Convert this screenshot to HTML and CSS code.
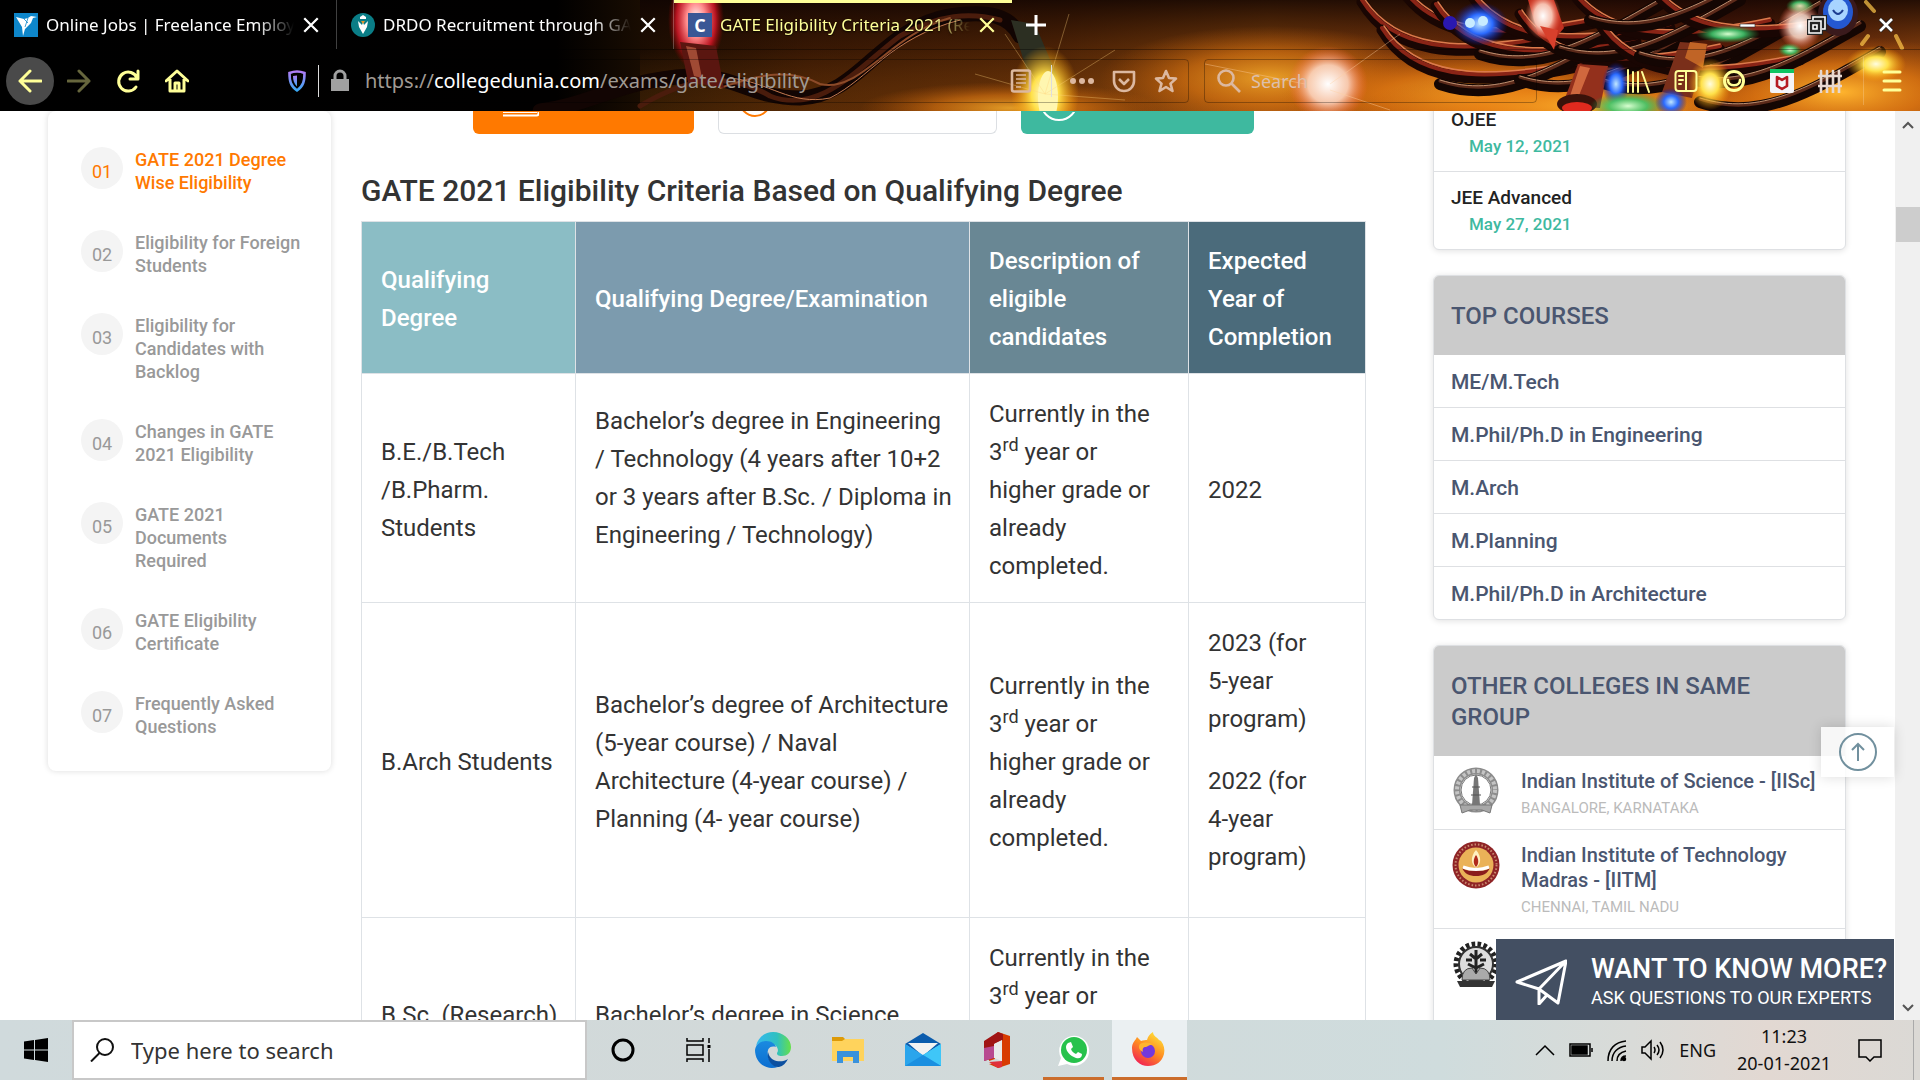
FILE: index.html
```html
<!DOCTYPE html>
<html lang="en">
<head>
<meta charset="utf-8">
<title>GATE Eligibility Criteria 2021</title>
<link rel="stylesheet" href="styles.css">
</head>
<body>
<header class="browser">
  <svg class="theme" viewBox="0 0 1920 111" preserveAspectRatio="xMaxYMid slice" aria-hidden="true">
    <defs>
      <linearGradient id="base" x1="0" x2="1" y1="0" y2="0">
        <stop offset="0" stop-color="#000"/><stop offset=".29" stop-color="#010000"/><stop offset=".34" stop-color="#1c0e02"/><stop offset=".42" stop-color="#3f1c04"/><stop offset=".55" stop-color="#5a2a07"/><stop offset=".66" stop-color="#8f4a0e"/><stop offset=".8" stop-color="#7a2f0c"/><stop offset=".9" stop-color="#6a220b"/><stop offset="1" stop-color="#9a4a10"/>
      </linearGradient>
      <linearGradient id="topdark" x1="0" x2="0" y1="0" y2="1">
        <stop offset="0" stop-color="#100402" stop-opacity=".85"/><stop offset=".45" stop-color="#200a02" stop-opacity=".25"/><stop offset="1" stop-color="#e07a10" stop-opacity=".15"/>
      </linearGradient>
      <radialGradient id="amber"><stop offset="0" stop-color="#ffb52e"/><stop offset=".5" stop-color="#e87d12" stop-opacity=".7"/><stop offset="1" stop-color="#c05a08" stop-opacity="0"/></radialGradient>
      <radialGradient id="white"><stop offset="0" stop-color="#fff"/><stop offset=".5" stop-color="#ffd9c8" stop-opacity=".85"/><stop offset="1" stop-color="#ff5a3c" stop-opacity="0"/></radialGradient>
      <radialGradient id="red"><stop offset="0" stop-color="#fff"/><stop offset=".35" stop-color="#ff8a8a"/><stop offset=".7" stop-color="#e0182a" stop-opacity=".8"/><stop offset="1" stop-color="#a00" stop-opacity="0"/></radialGradient>
      <radialGradient id="blue"><stop offset="0" stop-color="#bfe6ff"/><stop offset=".45" stop-color="#2b6bff"/><stop offset="1" stop-color="#0a12a0" stop-opacity="0"/></radialGradient>
      <radialGradient id="green"><stop offset="0" stop-color="#d8ffd0"/><stop offset=".5" stop-color="#3fc46a" stop-opacity=".9"/><stop offset="1" stop-color="#2a8a3a" stop-opacity="0"/></radialGradient>
      <radialGradient id="yellow"><stop offset="0" stop-color="#fffde0"/><stop offset=".4" stop-color="#ffe14a"/><stop offset="1" stop-color="#ff9a00" stop-opacity="0"/></radialGradient>
      <g id="cable"><path d="M0 0C30 50 90 60 200 36" stroke="#190603" stroke-width="11"/><path d="M0 -2C30 46 90 56 200 32" stroke="#8a2416" stroke-width="4"/><path d="M2 -4C32 43 92 53 200 30" stroke="#dc7a4c" stroke-width="1.500"/></g>
      <g id="dark"><path d="M0 40C60 60 110 30 180 -10" stroke="#140603" stroke-width="12"/><path d="M0 37C60 57 110 27 180 -13" stroke="#5c2a1a" stroke-width="3"/><path d="M0 36C60 55 110 25 180 -15" stroke="#c09070" stroke-width="1"/></g>
    </defs>
    <rect width="1920" height="111" fill="url(#base)"/>
    <rect x="640" width="1280" height="111" fill="url(#topdark)"/>
    <ellipse cx="1010" cy="108" rx="150" ry="26" fill="url(#amber)" opacity=".8"/>
    <ellipse cx="1270" cy="78" rx="170" ry="52" fill="url(#amber)" opacity=".8"/>
    <ellipse cx="1480" cy="96" rx="200" ry="50" fill="url(#amber)"/>
    <ellipse cx="1600" cy="106" rx="240" ry="36" fill="url(#amber)"/>
    <ellipse cx="1840" cy="92" rx="170" ry="56" fill="url(#amber)"/>
    <g fill="none" stroke-linecap="round">
      <path d="M540 111C590 105 620 80 690 76c50 0 60 22 110 22 60-2 80-70 150-82 40-6 60 0 70 20" stroke="#120503" stroke-width="15"/>
      <path d="M640 106c50-30 90-34 130-10 50 20 90-30 130-60 40-22 70-24 100-16" stroke="#4a1c0c" stroke-width="5"/>
      <path d="M720 88c40-14 70-20 100-4 40 10 70-50 130-66" stroke="#8c4a28" stroke-width="2"/>
      <path d="M730 78c40 4 60 28 100 20 40-20 60-60 130-78" stroke="#c47a50" stroke-width="1"/>
      <use href="#cable" x="1362" y="2"/><use href="#cable" x="1382" y="30"/><use href="#cable" x="1400" y="-14"/>
      <use href="#dark" x="1440" y="44"/><use href="#cable" x="1436" y="6"/><use href="#cable" x="1470" y="-8"/>
      <use href="#dark" x="1520" y="40"/><use href="#dark" x="1480" y="14"/><use href="#cable" x="1520" y="14"/>
      <use href="#cable" x="1570" y="-12"/><use href="#dark" x="1560" y="10"/><use href="#dark" x="1600" y="42"/>
      <use href="#cable" x="1600" y="24"/><use href="#dark" x="1640" y="16"/><use href="#dark" x="1680" y="36"/>
      <use href="#cable" x="1650" y="-16"/><use href="#dark" x="1590" y="-20"/><use href="#dark" x="1700" y="62"/>
    </g>
    <ellipse cx="696" cy="20" rx="28" ry="50" fill="url(#red)"/>
    <path d="M680 42l36 4 8 42-36-6z" fill="#5a1610"/><path d="M686 46l10 2 6 30-8-2z" fill="#a04a34"/>
    <path d="M1011 20l24 4 22 52-26 8z" fill="#2c2f22"/>
    <ellipse cx="1045" cy="94" rx="34" ry="48" fill="url(#yellow)"/><ellipse cx="1048" cy="97" rx="10" ry="26" fill="#fff6b0"/>
    <path d="M1045 94l70-44M1045 94l80 6M1045 94l-70-20M1045 94l24-80M1045 94l-40-60" stroke="#ffd27a" stroke-opacity=".35"/>
    <ellipse cx="1328" cy="84" rx="40" ry="38" fill="url(#white)"/>
    <path d="M1305 84l-100-20M1330 84l70-50M1330 90l60 20" stroke="#ffd0a0" stroke-opacity=".4"/>
    <ellipse cx="1480" cy="24" rx="28" ry="22" fill="url(#blue)"/><circle cx="1470" cy="23" r="5" fill="#c8ecff"/><circle cx="1483" cy="21" r="5" fill="#c8ecff"/><circle cx="1450" cy="23" r="7" fill="#2a18b0"/>
    <path d="M1528 0h26l10 28-12 14-14-8z" fill="#c03020"/><ellipse cx="1543" cy="16" rx="18" ry="24" fill="url(#white)"/><path d="M1540 26l18 4-4 20z" fill="#d8402c"/>
    <path d="M1578 64l30 2-8 42-38-2z" fill="#93301c"/><path d="M1580 66l10 2-12 30-8-2z" fill="#d0683e"/><ellipse cx="1577" cy="104" rx="20" ry="10" fill="#3a120a"/><ellipse cx="1577" cy="108" rx="15" ry="6" fill="#e02a1e"/>
    <ellipse cx="1616" cy="84" rx="14" ry="22" fill="url(#blue)"/><ellipse cx="1628" cy="106" rx="38" ry="14" fill="url(#green)"/>
    <path d="M1680 42l28 2-16 54-30-6z" fill="#7a2f1a"/><path d="M1690 42l17 2-4 24-18-10z" fill="#c06426"/><ellipse cx="1671" cy="102" rx="16" ry="14" fill="url(#blue)"/>
    <ellipse cx="1710" cy="84" rx="22" ry="26" fill="url(#yellow)"/><ellipse cx="1728" cy="34" rx="32" ry="9" fill="url(#green)"/><ellipse cx="1790" cy="50" rx="12" ry="7" fill="url(#green)"/><ellipse cx="1800" cy="6" rx="14" ry="8" fill="url(#green)"/>
    <ellipse cx="1800" cy="26" rx="22" ry="24" fill="url(#white)"/><ellipse cx="1838" cy="14" rx="20" ry="22" fill="#3a1a1c"/><ellipse cx="1838" cy="12" rx="15" ry="17" fill="#2458d0"/><ellipse cx="1838" cy="10" rx="10" ry="11" fill="#a8d4ff"/><path d="M1833 10q5 8 10 0" fill="none" stroke="#1c3c90" stroke-width="2"/>
    <ellipse cx="1876" cy="64" rx="30" ry="18" fill="url(#yellow)"/><path d="M1862 44l6-8M1896 36l6 12M1866 2l8 9" stroke="#ffc84a" stroke-width="4" stroke-linecap="round" opacity=".7"/>
  </svg>
  <div class="tabs">
    <div class="tab">
      <svg class="fav" viewBox="0 0 24 24"><path fill="#0e86ca" d="M0 0h24v24H0z"/><path fill="#fff" d="M2 4l8 2 4-1 3-2 6 1-4 1-2 5-6 6-2 7-1-9z"/><path d="M10 6l4 4M14 5l-3 9" stroke="#0e86ca" stroke-width=".8"/></svg>
      <span class="title">Online Jobs | Freelance Employment</span>
      <button class="x" aria-label="Close tab"><svg viewBox="0 0 16 16"><path d="M2 2l12 12M14 2L2 14"/></svg></button>
    </div>
    <div class="tab">
      <svg class="fav" viewBox="0 0 24 24"><circle cx="12" cy="12" r="12" fill="#0a7d86"/><path fill="#fff" d="M9 4l3-2 3 2v2H9zM7 8l4 4 1-3 1 3 4-4-1 6-4 7-4-7z"/><path d="M10 8l2 3 2-3z" fill="#e8952a"/></svg>
      <span class="title">DRDO Recruitment through GATE</span>
      <button class="x" aria-label="Close tab"><svg viewBox="0 0 16 16"><path d="M2 2l12 12M14 2L2 14"/></svg></button>
    </div>
    <div class="tab active">
      <span class="fav cfav">C</span>
      <span class="title">GATE Eligibility Criteria 2021 (Released)</span>
      <button class="x" aria-label="Close tab"><svg viewBox="0 0 16 16"><path d="M2 2l12 12M14 2L2 14"/></svg></button>
    </div>
    <button class="plus" aria-label="New tab"><svg viewBox="0 0 20 20"><path d="M10 0v20M0 10h20"/></svg></button>
    <div class="win">
      <button aria-label="Minimise"><svg viewBox="0 0 20 20"><path d="M2 9h15v3H2z" fill="#fff" stroke="#222" stroke-width=".6"/></svg></button>
      <button aria-label="Restore"><svg viewBox="0 0 20 20"><path d="M6 5V2h12v12h-3M2 6h12v12H2zM6 10h4v4H6z" fill="none" stroke="#222" stroke-width="4"/><path d="M6 5V2h12v12h-3M2 6h12v12H2zM6 10h4v4H6z" fill="none" stroke="#fff" stroke-width="1.6"/></svg></button>
      <button aria-label="Close"><svg viewBox="0 0 20 20"><path d="M4 4l12 12M16 4L4 16" stroke="#222" stroke-width="4"/><path d="M4 4l12 12M16 4L4 16" stroke="#fff" stroke-width="2.6"/></svg></button>
    </div>
  </div>
  <div class="toolbar">
    <button class="nav back" aria-label="Back"><svg viewBox="0 0 24 24"><path d="M23 12H2M12 2L2 12l10 10"/></svg></button>
    <button class="nav fwd" aria-label="Forward"><svg viewBox="0 0 24 24"><path d="M1 12h21M12 2l10 10-10 10"/></svg></button>
    <button class="nav" aria-label="Reload"><svg viewBox="0 0 24 24"><path d="M20 18a9.500 9.500 0 1 1 1-9M22 2v8h-8"/></svg></button>
    <button class="nav" aria-label="Home"><svg viewBox="0 0 24 24"><path d="M1 12L12 2l11 10M5 10v12h14V10M10 22v-8h4v8"/></svg></button>
    <div class="url">
      <svg class="i20" viewBox="0 0 20 22"><defs><linearGradient id="sh" x2="0" y2="1"><stop stop-color="#b07cf5"/><stop offset="1" stop-color="#3aa8f5"/></linearGradient></defs><path d="M10 1.500c3 0 5 .5 7.500 1.500 0 8-1 13-7.500 17.500C3.500 16 2.500 11 2.500 3 5 2 7 1.500 10 1.500z" fill="none" stroke="url(#sh)" stroke-width="2.600"/><path d="M10 5.500v11C7 13.500 6 10 6 6z" fill="url(#sh)"/></svg>
      <span class="vline"></span>
      <svg class="i20" viewBox="0 0 20 22"><path d="M1 9h18v12H1z" fill="#a0a0a0"/><path d="M5 10V6a5 5 0 0 1 10 0v4" fill="none" stroke="#a0a0a0" stroke-width="3"/></svg>
      <span class="addr">https://<b>collegedunia.com</b>/exams/gate/eligibility</span>
      <span class="urlicons">
        <svg viewBox="0 0 24 24"><rect x="3" y="1.500" width="18" height="21" rx="2"/><path d="M7 6h10M7 10h10M7 14h10M7 18h5" stroke-width="1.500"/></svg>
        <span class="vline"></span>
        <svg viewBox="0 0 24 24"><circle class="f" cx="3" cy="12" r="3"/><circle class="f" cx="12" cy="12" r="3"/><circle class="f" cx="21" cy="12" r="3"/></svg>
        <svg viewBox="0 0 24 24"><path d="M2 3h20v9a10 10 0 0 1-20 0zM7 10l5 5 5-5"/></svg>
        <svg viewBox="0 0 24 24"><path d="M12 2l3 7 7 .6-5.500 5L18.500 22 12 18l-6.500 4 2-7.400L2 9.600 9 9z"/></svg>
      </span>
    </div>
    <label class="find"><svg viewBox="0 0 24 24"><circle cx="9" cy="9" r="7.500"/><path d="M14.500 14.500L23 23"/></svg><input type="text" placeholder="Search" aria-label="Search"></label>
    <div class="tools">
      <button aria-label="Library"><svg viewBox="0 0 24 24"><path d="M2 1v22M7 3v20M12 3v20M16 3l7 20"/></svg></button>
      <button aria-label="Sidebars"><svg viewBox="0 0 24 24"><rect x="1.500" y="2" width="21" height="20" rx="3"/><path d="M12 2v20M5 7h4M5 11h4M5 15h2" /></svg></button>
      <button aria-label="Account"><svg viewBox="0 0 24 24"><circle cx="12" cy="12" r="9.500" stroke-width="3"/><path d="M6 11c0 7 12 7 12 0" stroke-width="2.600"/></svg></button>
      <button aria-label="WebAdvisor"><svg viewBox="0 0 24 24"><rect width="24" height="24" rx="2" fill="#f4f4f8" stroke="none"/><path d="M0 0h24v4H0z" fill="#0fc463" stroke="none"/><path d="M7 8l5 3 5-3v9l-5 3-5-3z" stroke="#b51a22" stroke-width="2.600"/></svg></button>
      <button aria-label="Containers"><svg viewBox="0 0 24 24"><path d="M3 24V2M9 24V2M15 24V2M21 24V2M0 7h24M0 17h24" stroke="#e8d8d0" stroke-width="2.600"/></svg></button>
      <button class="menu" aria-label="Menu"><svg viewBox="0 0 24 24"><path d="M4 3h16M4 12h16M4 21h16" stroke-width="3"/></svg></button>
    </div>
  </div>
</header>

<div class="view">
  <div class="page">
    <nav class="toc">
      <ol>
        <li class="on"><span class="num">01</span><a href="#table">GATE 2021 Degree Wise Eligibility</a></li>
        <li><span class="num">02</span><a href="#">Eligibility for Foreign Students</a></li>
        <li><span class="num">03</span><a href="#">Eligibility for Candidates with Backlog</a></li>
        <li><span class="num">04</span><a href="#">Changes in GATE 2021 Eligibility</a></li>
        <li><span class="num">05</span><a href="#">GATE 2021<br>Documents<br>Required</a></li>
        <li><span class="num">06</span><a href="#">GATE Eligibility Certificate</a></li>
        <li><span class="num">07</span><a href="#">Frequently Asked Questions</a></li>
      </ol>
    </nav>
    <main>
      <div class="ctas">
        <button class="cta orange" aria-label="Download"><svg viewBox="0 0 36 22"><path d="M0 3.500h33.500a2 2 0 0 0 2-2V-10H0M0 0h34"/></svg></button>
        <button class="cta plain" aria-label="Updates"><svg viewBox="0 0 36 22"><circle cx="18" cy="-10" r="15"/></svg></button>
        <button class="cta green" aria-label="Ask"><svg viewBox="0 0 36 22"><circle cx="18" cy="-10" r="18"/></svg></button>
      </div>
      <h2>GATE 2021 Eligibility Criteria Based on Qualifying Degree</h2>
      <table id="table">
        <colgroup><col class="c1"><col class="c2"><col class="c3"><col class="c4"></colgroup>
        <thead><tr><th>Qualifying<br>Degree</th><th>Qualifying Degree/Examination</th><th>Description of eligible candidates</th><th>Expected Year of Completion</th></tr></thead>
        <tbody>
          <tr><td>B.E./B.Tech<br>/B.Pharm.<br>Students</td><td><p>Bachelor’s degree in Engineering<br>/ Technology (4 years after 10+2<br>or 3 years after B.Sc. / Diploma in<br>Engineering / Technology)</p></td><td>Currently in the<br>3<sup>rd</sup> year or<br>higher grade or<br>already<br>completed.</td><td>2022</td></tr>
          <tr><td>B.Arch Students</td><td>Bachelor’s degree of Architecture<br>(5-year course) / Naval<br>Architecture (4-year course) /<br>Planning (4- year course)</td><td>Currently in the<br>3<sup>rd</sup> year or<br>higher grade or<br>already<br>completed.</td><td><p>2023 (for<br>5-year<br>program)</p><p>2022 (for<br>4-year<br>program)</p></td></tr>
          <tr><td>B.Sc. (Research)<br>/ B.S.</td><td>Bachelor’s degree in Science<br>(Post-Diploma/4 years after 10+2)</td><td>Currently in the<br>3<sup>rd</sup> year or<br>higher grade or<br>already<br>completed.</td><td>2022</td></tr>
        </tbody>
      </table>
    </main>
    <aside>
      <section class="card exams">
        <div><a href="#">OJEE</a><time>May 12, 2021</time></div>
        <div><a href="#">JEE Advanced</a><time>May 27, 2021</time></div>
      </section>
      <section class="card">
        <h3>TOP COURSES</h3>
        <ul class="courses">
          <li><a href="#">ME/M.Tech</a></li>
          <li><a href="#">M.Phil/Ph.D in Engineering</a></li>
          <li><a href="#">M.Arch</a></li>
          <li><a href="#">M.Planning</a></li>
          <li><a href="#">M.Phil/Ph.D in Architecture</a></li>
        </ul>
      </section>
      <section class="card">
        <h3>OTHER COLLEGES IN SAME<br>GROUP</h3>
        <ul class="colleges">
          <li>
            <svg viewBox="0 0 48 48"><circle cx="24" cy="23" r="19" fill="none" stroke="#8c8c8c" stroke-width="7"/><circle cx="24" cy="23" r="19" fill="none" stroke="#c4c4c4" stroke-width="4" stroke-dasharray="3 2"/><circle cx="24" cy="23" r="15" fill="#fff" stroke="#777"/><path d="M22 11l2-4 2 4 2 27h-8z" fill="#777"/><path d="M20 20h8M19 28h10" stroke="#555"/><path d="M8 38h32l-2 8-8-3H18l-8 3z" fill="#a8a8a8" stroke="#777"/></svg>
            <div><a href="#">Indian Institute of Science - [IISc]</a><small>BANGALORE, KARNATAKA</small></div>
          </li>
          <li>
            <svg viewBox="0 0 48 48"><circle cx="24" cy="24" r="23.500" fill="#8f2426"/><circle cx="24" cy="24" r="20.500" fill="none" stroke="#c98a70" stroke-width="2" stroke-dasharray="1.500 2"/><circle cx="24" cy="24" r="17.500" fill="#eab258"/><path d="M24 9c6 7 5 14 0 18-5-4-6-11 0-18z" fill="#fff0c0"/><path d="M24 14c3 4 3 9 0 12-3-3-3-8 0-12z" fill="#b02a1c"/><path d="M10 27c4 3 9 3 14 2 5 1 10 1 14-2-3 6-7 8-14 8s-11-2-14-8z" fill="#8a1c1c"/><path d="M11 26q13 5 26 0" stroke="#fff" stroke-width="3" fill="none"/></svg>
            <div><a href="#">Indian Institute of Technology Madras - [IITM]</a><small>CHENNAI, TAMIL NADU</small></div>
          </li>
          <li>
            <svg viewBox="0 0 48 48"><circle cx="24" cy="24" r="19.500" fill="none" stroke="#222" stroke-width="6" stroke-dasharray="3.500 2.300"/><circle cx="24" cy="24" r="17" fill="#ddd" stroke="#333" stroke-width="2"/><path d="M24 10v26M18 14l6 5 6-5M14 20h6M28 20h6M16 24l8 4 8-4" stroke="#222" stroke-width="3" fill="none"/><path d="M10 40q0-12 10-12l4 6 4-6q10 0 10 12z" fill="#aaa" stroke="#444"/><path d="M5 41h38l-3 6H8z" fill="#333"/></svg>
          </li>
        </ul>
      </section>
    </aside>
  </div>
  <div class="scroll"><svg viewBox="0 0 12 8"><path d="M1 7l5-5 5 5"/></svg><span class="thumb"></span><svg viewBox="0 0 12 8"><path d="M1 1l5 5 5-5"/></svg></div>
  <button class="totop" aria-label="Back to top"><svg viewBox="0 0 40 40"><circle cx="20" cy="20" r="18"/><path d="M20 29V12M14 18l6-6 6 6"/></svg></button>
  <button class="ask"><svg viewBox="0 0 52 46"><path d="M2 23L51 2 43 44 24 30zM51 2L24 30v15l8-9"/></svg><span><strong>WANT TO KNOW MORE?</strong><em>ASK QUESTIONS TO OUR EXPERTS</em></span></button>
</div>

<footer class="taskbar">
  <button class="start" aria-label="Start"><svg viewBox="0 0 24 24"><path d="M0 3.500L10 2v9.500H0zM11 2l13-2v11.500H11zM0 12.500h10V22L0 20.500zM11 12.500h13V24l-13-2z"/></svg></button>
  <label class="tsearch"><svg viewBox="0 0 24 24"><circle cx="15" cy="9" r="8"/><path d="M9.500 15L1 23.500"/></svg><input type="text" placeholder="Type here to search" aria-label="Type here to search"></label>
  <div class="apps">
    <button aria-label="Cortana"><svg viewBox="0 0 24 24"><circle cx="12" cy="12" r="10" fill="none" stroke="#000" stroke-width="3"/></svg></button>
    <button aria-label="Task View"><svg viewBox="0 0 24 24"><path d="M1 0v3h16V0M1 24v-3h16v3M1 7h16v10H1zM23 0v5M23 11v13" fill="none" stroke="#000" stroke-width="1.500"/><path d="M21.500 7h3v3h-3z"/></svg></button>
    <button aria-label="Edge"><svg class="big" viewBox="0 0 36 36"><defs><linearGradient id="e1"><stop stop-color="#35b8f0"/><stop offset=".6" stop-color="#2fc0c0"/><stop offset="1" stop-color="#66e04a"/></linearGradient><linearGradient id="e2" x2="0" y2="1"><stop stop-color="#1a8ae0"/><stop offset="1" stop-color="#0c6ed0"/></linearGradient></defs><path d="M1 14C3 5 10 0 18 0c10 0 18 7 18 15 0 6-4 9-9 9-4 0-5-1-5-3 2-2 1-8-5-9C10 9 3 11 1 14z" fill="url(#e1)"/><path d="M0 18c1-7 7-9 11-9 6 0 9 3 10 6-8-2-9 4-8 9 1 5 5 10 10 11C10 39 0 30 0 18z" fill="url(#e2)"/><path d="M13 20c-2 8 5 16 11 15 4-1 7-4 9-8-6 4-16 3-19-4z" fill="#0c50a0"/></svg></button>
    <button aria-label="File Explorer"><svg class="big" viewBox="0 0 36 36"><path d="M2 5h11l3 3v6H2z" fill="#dd9a08"/><path d="M2 9h10l3-2h19v22H2z" fill="#ffd35c"/><path d="M7 31V19h22v12h-6v-6H13v6z" fill="#3a92dc"/></svg></button>
    <button aria-label="Mail"><svg class="big" viewBox="0 0 36 36"><path d="M0 12L18 1l18 11-18 12z" fill="#0b5cad"/><path d="M3 11h30L18 24z" fill="#f2f2f2"/><path d="M0 12l18 11 18-11v22H0z" fill="#2aa5ec"/><path d="M36 12v22L18 23z" fill="#3fc6f8"/><path d="M0 34h36L18 23z" fill="#1a8fe0"/></svg></button>
    <button aria-label="Office"><svg class="big" viewBox="0 0 36 36"><path d="M18 0l12 4v28l-12 4-9-4 13-2V8l-7 3v16l-6 2V8z" fill="#d83b01"/><path d="M4 9L18 0l5 2v6l-9 4v14l-10 3z" fill="#a01414"/><path d="M4 16l10-2v12L4 29z" fill="#b84a90"/><path d="M14 12l8-4v21l-8-3z" fill="#e8eaea"/><path d="M9 30l13-1v6l-4 1z" fill="#e0303a"/></svg></button>
    <button class="run" aria-label="WhatsApp"><svg class="big" viewBox="0 0 36 36"><path d="M3 34l3-8a15 15 0 1 1 6 6z" fill="#fff"/><circle cx="19" cy="18" r="13" fill="#27c24c"/><path d="M13 11l3-1 2 5-2 2c1 3 3 4 5 5l2-2 4 2c0 4-3 5-6 4-6-2-10-7-10-11 0-2 1-3 2-4z" fill="#fff"/></svg></button>
    <button class="run cur" aria-label="Firefox"><svg class="big" viewBox="0 0 36 36"><defs><linearGradient id="fx" x1=".8" x2=".2" y2="1"><stop stop-color="#ffe63a"/><stop offset=".5" stop-color="#ff8a20"/><stop offset="1" stop-color="#f01858"/></linearGradient></defs><path d="M2 16C2 10 6 8 7 5l4 4c2-1 5-1 6-1 1-4 3-6 6-8 0 4 4 5 6 8l2 1c3 4 4 8 3 13-2 8-8 12-16 12S2 28 2 16z" fill="url(#fx)"/><circle cx="18" cy="19" r="7" fill="#7438dd"/><path d="M10 12c4-2 10-2 13 1-3-1-4 1-7 2-3 0-4 2-3 5-4-2-5-5-3-8z" fill="#ffb52e"/></svg></button>
  </div>
  <div class="tray">
    <svg viewBox="0 0 24 24"><path d="M3 17l9-9 9 9"/></svg>
    <svg viewBox="0 0 24 24"><path d="M1 6h20v12H1zM23 10v4"/><path d="M3 8h15v8H3z" fill="#000"/></svg>
    <svg viewBox="0 0 24 24"><path d="M3 23C3 11 10 4 21 3M7 23C7 14 13 9 21 8M12 23c0-6 4-9 9-10M16 23c0-3 2-5 5-5"/><circle cx="19" cy="21" r="1.500" fill="#000"/></svg>
    <svg viewBox="0 0 24 24"><path d="M1 9h3l6-6v18l-6-6H1zM13 9q2 3 0 6M16 7q4 5 0 10M19 4q6 8 0 16"/></svg>
    <span class="lang">ENG</span>
    <span class="clock">11:23<br>20-01-2021</span>
    <svg class="note" viewBox="0 0 24 24"><path d="M1 2h22v17h-7l-4 4-4-4H1z"/></svg>
    <span class="desk"></span>
  </div>
</footer>
</body>
</html>
```
FILE: styles.css
```css
* { box-sizing: border-box; }
body { margin: 0; height: 100vh; display: flex; flex-direction: column; overflow: hidden; background: #fff; color: #333; font-family: Roboto, sans-serif; }
button { border: 0; padding: 0; background: none; color: inherit; font: inherit; }
input { border: 0; padding: 0; background: none; font: inherit; min-width: 0; flex: 1; outline: 0; }
a { color: inherit; text-decoration: none; }
ul, ol { list-style: none; margin: 0; padding: 0; }
svg { display: block; flex: none; }

/* browser chrome */
.browser { position: relative; flex: none; height: 111px; background: #000; color: #fff; font-family: "Noto Sans", "Open Sans", sans-serif; overflow: hidden; }
.theme { position: absolute; inset: 0; width: 100%; height: 100%; }
.tabs, .toolbar { position: relative; display: flex; align-items: center; }
.tabs { height: 50px; border-bottom: 1px solid rgba(0, 0, 0, .35); }
.tab { width: 337px; height: 49px; padding: 0 16px 0 14px; display: flex; align-items: center; gap: 8px; border-right: 1px solid rgba(255, 255, 255, .25); font-size: 17px; }
.tab.active { border-top: 3px solid #ffff98; border-right: 0; color: #ffff98; text-shadow: 0 1px 2px #000; height: 50px; width: 338px; padding-bottom: 3px; }
.fav { width: 24px; height: 24px; flex: none; }
.cfav { background: #3a5795; color: #fff; font: bold 18px/24px "Open Sans", sans-serif; text-align: center; text-shadow: none; }
.title { flex: 1; overflow: hidden; white-space: nowrap; -webkit-mask-image: linear-gradient(90deg, #000 85%, transparent); mask-image: linear-gradient(90deg, #000 85%, transparent); }
.x svg { width: 18px; height: 18px; stroke: currentColor; stroke-width: 2; fill: none; }
.plus { margin-left: 14px; }
.plus svg { width: 20px; height: 20px; stroke: #fff; stroke-width: 3; }
.win { margin-left: auto; display: flex; }
.win button { width: 69px; display: grid; place-items: center; }
.win svg { width: 20px; height: 20px; }
.toolbar { height: 61px; padding-left: 6px; gap: 1px; }
.nav { width: 48px; height: 48px; display: grid; place-items: center; }
.nav svg, .tools svg { width: 24px; height: 24px; fill: none; stroke: #ffff98; stroke-width: 3; stroke-linecap: round; stroke-linejoin: round; }
.back { background: #4a4a4a; border-radius: 50%; }
.fwd { opacity: .4; }
.url, .find { height: 44px; border: 1px solid rgba(0, 0, 0, .3); border-radius: 4px; display: flex; align-items: center; }
.url { flex: 1; margin-left: 74px; padding: 0 10px; gap: 11px; font-size: 20px; color: #a09a94; min-width: 0; }
.i20 { width: 20px; height: 24px; }
.vline { width: 1px; height: 32px; background: #ddd; }
.addr { flex: 1; overflow: hidden; white-space: nowrap; margin-left: 4px; }
.addr b { color: #fff; font-weight: 400; }
.urlicons { display: flex; align-items: center; gap: 18px; }
.urlicons svg, .find svg { width: 24px; height: 24px; fill: none; stroke: #dcb8a0; stroke-width: 2.6; stroke-linejoin: round; }
.urlicons .f { fill: #dcb8a0; stroke: none; }
.find { width: 333px; margin-left: 14px; padding-left: 12px; gap: 10px; font-size: 18px; }
.find input::placeholder { color: #dcbfae; }
.tools { display: flex; margin-left: 76px; }
.tools button { width: 48px; height: 48px; display: grid; place-items: center; }
.tools svg { stroke-width: 2; }
.tools .menu { width: 57px; margin-left: 9px; border-left: 1px solid rgba(255, 255, 255, .2); }

/* page viewport */
.view { position: relative; flex: 1; min-height: 0; display: flex; overflow: hidden; }
.page { flex: 1; display: flex; align-items: flex-start; padding: 0 49px 0 48px; min-width: 0; }
.scroll { width: 25px; background: #f0f0f0; display: flex; flex-direction: column; align-items: center; padding: 10px 0 8px; }
.scroll svg { width: 12px; height: 8px; stroke: #555; stroke-width: 2; fill: none; }
.thumb { width: 24px; height: 35px; background: #cdcdcd; margin: 78px 0 auto; }

.toc { width: 283px; margin-right: 30px; padding: 36px 24px 34px 33px; border-radius: 8px; box-shadow: 0 0 6px rgba(0, 0, 0, .14); font-size: 18px; line-height: 23px; font-weight: 500; color: #999; }
.toc li { display: flex; gap: 12px; margin-bottom: 37px; }
.toc li:last-child { margin-bottom: 0; }
.toc a { padding-top: 1px; margin-bottom: -1px; }
.num { width: 42px; height: 42px; flex: none; margin-bottom: -6px; padding-top: 4px; border-radius: 50%; background: #f4f4f4; text-align: center; line-height: 42px; font-weight: 400; }
.toc .on { color: #ff7900; }

main { flex: 1; min-width: 0; }
.ctas { display: flex; gap: 24px; padding-left: 112px; }
.cta { height: 23px; border-radius: 0 0 6px 6px; padding-left: 30px; overflow: hidden; }
.cta svg { width: 36px; height: 22px; fill: none; stroke: #fff; stroke-width: 2; }
.orange { width: 221px; background: #ff7900; }
.plain { width: 279px; border: 1px solid #dcdfe3; border-top: 0; padding-left: 18px; }
.plain svg { stroke: #ff7900; }
.green { width: 233px; background: #3eb99f; padding-left: 20px; }
h2 { margin: 38px 0 11px; font-size: 30px; line-height: 38px; font-weight: 500; color: #333; white-space: nowrap; }
table { width: 100%; border-collapse: collapse; table-layout: fixed; font-size: 24px; line-height: 38px; }
.c1 { width: 214px; }
.c2 { width: 394px; }
.c3 { width: 219px; }
.c4 { width: 177px; }
th, td { border: 1px solid #dee2e6; padding: 21px 0 17px 19px; text-align: left; vertical-align: middle; }
th { color: #fff; font-weight: 500; padding: 20px 12px 17px 19px; background: #8bbdc5; }
th:nth-child(2) { background: #7c9bae; }
th:nth-child(3) { background: #698794; }
th:nth-child(4) { background: #4b6b7b; }
td { white-space: nowrap; }
td p { margin: 0 0 24px; }
sup { font-size: 18px; line-height: 0; }

aside { width: 413px; margin-left: 68px; }
.card { margin-bottom: 25px; border: 1px solid #dee0e3; border-radius: 6px; overflow: hidden; box-shadow: 0 1px 6px rgba(0, 0, 0, .12); background: #fff; }
.exams { margin-top: -18px; font-size: 19px; line-height: 27px; font-weight: 500; }
.exams div { padding: 12px 17px 11px; }
.exams div + div { border-top: 1px solid #dee0e3; }
.exams a { display: block; color: #222; }
.exams time { display: block; padding-left: 18px; font-size: 17px; color: #3eb99f; }
h3 { margin: 0; padding: 25px 17px 23px; background: #cbcbcb; color: #4a5670; font-size: 24px; line-height: 31px; font-weight: 500; white-space: nowrap; }
.courses li { padding: 14px 17px 12px; font-size: 21px; line-height: 26px; font-weight: 500; color: #4a5670; }
.courses li + li, .colleges li + li { border-top: 1px solid #dee0e3; }
.colleges li { display: flex; gap: 20px; padding: 11px 0 9px 17px; }
.colleges svg { width: 50px; height: 48px; }
.colleges a { display: block; padding-top: 2px; font-size: 20px; line-height: 25px; font-weight: 500; color: #4a5670; }
.colleges small { display: block; margin-top: 2px; font-size: 15px; line-height: 24px; color: #bbb; }
.colleges li:last-child { padding-bottom: 60px; }

.totop { position: absolute; right: 26px; bottom: 243px; width: 73px; height: 50px; display: grid; place-items: center; background: rgba(255, 255, 255, .85); box-shadow: 0 0 12px rgba(0, 0, 0, .14); }
.totop svg { width: 40px; height: 40px; fill: none; stroke: #71909e; stroke-width: 2; }
.ask { position: absolute; right: 26px; bottom: 0; width: 398px; height: 81px; padding: 4px 0 0 19px; display: flex; align-items: center; gap: 24px; background: #434f62; color: #fff; text-align: left; white-space: nowrap; }
.ask svg { width: 52px; height: 46px; fill: none; stroke: #fff; stroke-width: 3; stroke-linejoin: round; }
.ask strong { display: block; font-size: 27px; line-height: 32px; font-weight: 500; }
.ask em { display: block; font-size: 18px; line-height: 26px; font-style: normal; }

/* windows taskbar */
.taskbar { flex: none; height: 60px; display: flex; background: linear-gradient(90deg, #d0dadc 0, #d2d9d9 40%, #cfdcdd 75%, #d9dbd8 85%, #e2d8d2 92%, #dbd9d5 100%); font-family: "Noto Sans", "Open Sans", sans-serif; color: #111; }
.start { width: 72px; display: grid; place-items: center; }
.start svg { width: 24px; height: 24px; }
.tsearch { width: 515px; border: 2px solid #c8c8c8; background: #fff; display: flex; align-items: center; gap: 17px; padding-left: 16px; font-size: 22px; }
.tsearch svg { width: 24px; height: 24px; fill: none; stroke: #111; stroke-width: 2; }
.tsearch input::placeholder { color: #333; }
.apps { display: flex; }
.apps button { width: 75px; padding-right: 4px; display: grid; place-items: center; position: relative; }
.apps svg { width: 24px; height: 24px; overflow: visible; }
.apps .big { width: 36px; height: 36px; }
.run::after { content: ""; position: absolute; bottom: 0; left: 6px; right: 8px; height: 3px; background: #cb6d2c; }
.cur { background: #ebf0f2; }
.cur::after { left: 0; right: 0; }
.tray { margin-left: auto; display: flex; align-items: center; gap: 12px; font-size: 18px; }
.tray svg { width: 24px; height: 24px; fill: none; stroke: #000; stroke-width: 1.5; }
.lang { margin-left: 2px; }
.clock { width: 112px; text-align: center; line-height: 27px; }
.tray .note { margin-left: 6px; margin-right: 19px; }
.desk { width: 7px; height: 60px; border-left: 1px solid #aaa; }
```
